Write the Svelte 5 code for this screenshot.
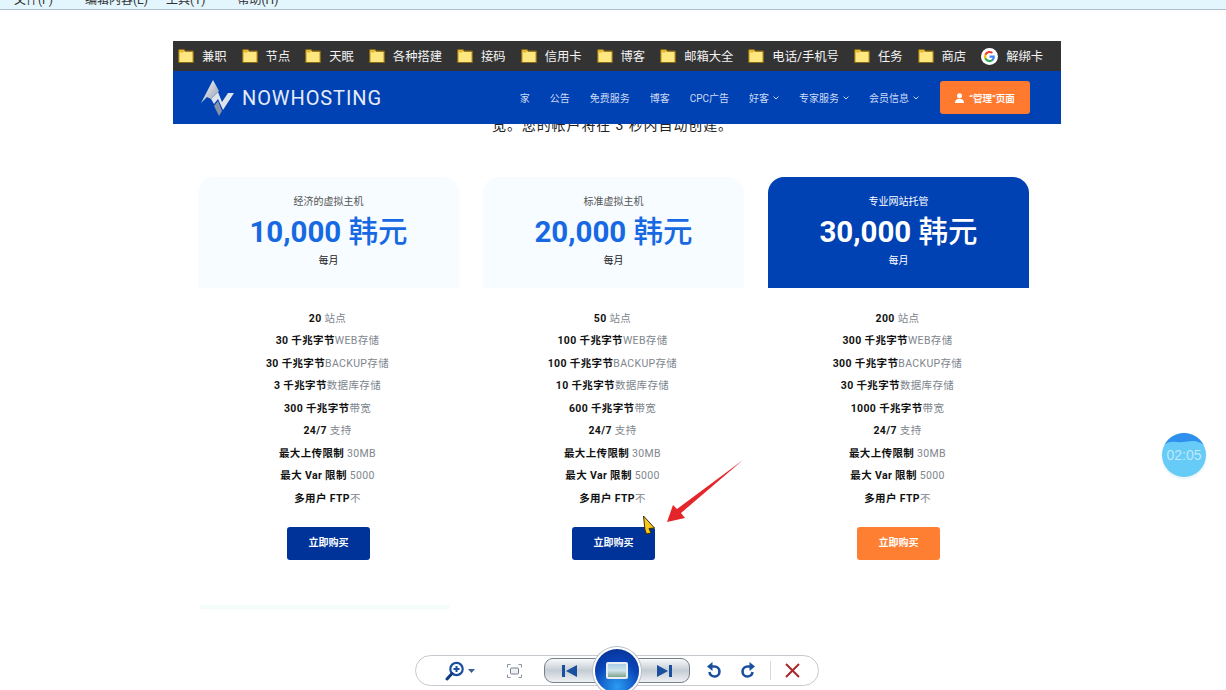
<script lang="ts">
  const bookmarks = ["兼职", "节点", "天眠", "各种搭建", "接码", "信用卡", "博客", "邮箱大全", "电话/手机号", "任务", "商店"];

  const navLinks = [
    { label: "家" },
    { label: "公告" },
    { label: "免费服务" },
    { label: "博客" },
    { label: "CPC广告" },
    { label: "好客", sub: true },
    { label: "专家服务", sub: true },
    { label: "会员信息", sub: true }
  ];

  const plans = [
    { name: "经济的虚拟主机", price: "10,000", sites: 20, web: 30, backup: 30, db: 3, traffic: 300 },
    { name: "标准虚拟主机", price: "20,000", sites: 50, web: 100, backup: 100, db: 10, traffic: 600 },
    { name: "专业网站托管", price: "30,000", sites: 200, web: 300, backup: 300, db: 30, traffic: 1000, featured: true }
  ];

  function rows(p: any) {
    return [
      [`${p.sites}`, " 站点"],
      [`${p.web} 千兆字节`, "WEB存储"],
      [`${p.backup} 千兆字节`, "BACKUP存储"],
      [`${p.db} 千兆字节`, "数据库存储"],
      [`${p.traffic} 千兆字节`, "带宽"],
      ["24/7", " 支持"],
      ["最大上传限制", " 30MB"],
      ["最大 Var 限制", " 5000"],
      ["多用户 FTP", "不"]
    ];
  }
</script>

<div class="menu-strip">
  <span>文件(F)</span><span>编辑内容(E)</span><span>工具(T)</span><span>帮助(H)</span>
</div>

<div class="site">
  <div class="bookmarks">
    {#each bookmarks as b}
      <span class="bm">
        <svg width="16" height="14" viewBox="0 0 16 14">
          <path d="M.7 1.500a.8.800 0 0 1 .8-.8h4.500l1.500 1.500h7a.8.800 0 0 1 .8.8v9.800a.8.800 0 0 1-.8.8H1.500a.8.800 0 0 1-.8-.8z" fill="#ffe77f" stroke="#8a6a12" stroke-width="1.300" />
          <path d="M1.400 1.400h4.300v2H1.400z" fill="#e5b52a" />
        </svg>
        {b}
      </span>
    {/each}
    <span class="bm">
      <svg width="17" height="17" viewBox="0 0 48 48">
        <circle cx="24" cy="24" r="24" fill="#fff" />
        <path d="M39 24.500c0-1.200-.1-2.300-.3-3.400H24v6.400h8.400a7.200 7.200 0 0 1-3.100 4.700v3.900h5C37.300 33 39 29.100 39 24.500z" fill="#4285f4" />
        <path d="M24 40c4.200 0 7.700-1.400 10.300-3.800l-5-3.900c-1.400.9-3.200 1.500-5.300 1.500-4.100 0-7.500-2.700-8.700-6.400h-5.200v4A16 16 0 0 0 24 40z" fill="#34a853" />
        <path d="M15.300 27.400a9.600 9.600 0 0 1 0-6.800v-4h-5.200a16 16 0 0 0 0 14.800z" fill="#fbbc05" />
        <path d="M24 14.200c2.300 0 4.300.8 5.900 2.300l4.400-4.400A16 16 0 0 0 10.100 16.600l5.200 4c1.200-3.700 4.600-6.400 8.700-6.400z" fill="#ea4335" />
      </svg>
      解绑卡
    </span>
  </div>

  <header class="nav">
    <div class="logo">
      <svg width="33" height="36" viewBox="0 0 33 36">
        <defs>
          <linearGradient id="silver" x1="0" y1="0" x2="1" y2="1">
            <stop offset="0" stop-color="#ffffff" />
            <stop offset="1" stop-color="#8d99ad" />
          </linearGradient>
        </defs>
        <path d="M0 23 L12 0 L18 11 L10 19 L6 17z" fill="url(#silver)" />
        <path d="M10 19 L17 12 L21 22 L27 13 L33 13 L22 30 L17 19 L13 24z" fill="#dfe4ec" />
        <path d="M13 26 L17 21 L21 31 L18 36z" fill="#8592a8" />
      </svg>
      <span>NOWHOSTING</span>
    </div>
    <nav>
      {#each navLinks as l}
        <span class="link">
          {l.label}
          {#if l.sub}
            <svg width="6" height="4" viewBox="0 0 6 4"><path d="M.6.6 3 3l2.400-2.400" fill="none" stroke="#c9d8f2" stroke-width="1" /></svg>
          {/if}
        </span>
      {/each}
    </nav>
    <button class="panel-btn">
      <svg width="9" height="10" viewBox="0 0 9 10"><circle cx="4.500" cy="2.700" r="2.500" fill="#fff" /><path d="M0 10c0-3 1.800-4.200 4.500-4.200S9 7 9 10z" fill="#fff" /></svg>
      “管理”页面
    </button>
  </header>

  <p class="intro">宽。您的帐户将在 3 秒内自动创建。</p>

  <section class="plans">
    {#each plans as p}
      <article class="plan">
        <div class="head" class:featured={p.featured}>
          <div class="name">{p.name}</div>
          <div class="price"><b>{p.price}</b> 韩元</div>
          <div class="per">每月</div>
        </div>
        <ul>
          {#each rows(p) as r}
            <li><b>{r[0]}</b>{r[1]}</li>
          {/each}
        </ul>
        <button class="buy" class:orange={p.featured}>立即购买</button>
      </article>
    {/each}
  </section>

  <div class="next-row"></div>
</div>

<svg class="annot" width="1226" height="690" viewBox="0 0 1226 690">
  <polygon points="743,460 681,513 685,518 667,522 673,505 677,509" fill="#e4262b" />
  <polygon points="643.500,516 654.500,528 649,528.500 651,533 646.500,534 645,530" fill="#f9c81e" stroke="#3a3000" stroke-width="1" />
</svg>

<div class="timer">
  <svg width="44" height="44" viewBox="0 0 44 44">
    <path d="M0 0h44v13c-5-3-8-5-14-5-6 0-10 2-15 1C9 8 5 9 0 13z" fill="#2f8fec" />
  </svg>
  <span>02:05</span>
</div>

<div class="viewer">
  <span class="zoom-tool">
    <svg width="20" height="20" viewBox="0 0 20 20">
      <circle cx="11.500" cy="8" r="6.200" fill="#fff" stroke="#1a4fa0" stroke-width="2.200" />
      <path d="M7 12.500 2 18" stroke="#123a80" stroke-width="3" stroke-linecap="round" />
      <path d="M8.500 8h6M11.500 5v6" stroke="#1a4fa0" stroke-width="2" />
    </svg>
    <svg width="7" height="4" viewBox="0 0 7 4"><path d="M0 0h7L3.500 4z" fill="#3a5d92" /></svg>
  </span>
  <svg class="fit" width="15" height="14" viewBox="0 0 15 14">
    <rect x="3.500" y="4" width="8" height="6" rx="1" fill="#eef1f4" stroke="#77818c" />
    <path d="M.5 3.500v-3h3M11.500.5h3v3M14.500 10.500v3h-3M3.500 13.500h-3v-3" fill="none" stroke="#8a949e" />
  </svg>
  <div class="player">
    <svg width="15" height="12" viewBox="0 0 15 12"><path d="M0 0h3v12H0zM15 0v12L4 6z" fill="#1a4fa0" /></svg>
    <span class="play-circle">
      <span class="pic"></span>
    </span>
    <svg width="15" height="12" viewBox="0 0 15 12"><path d="M0 0v12l11-6zM12 0h3v12h-3z" fill="#1a4fa0" /></svg>
  </div>
  <svg class="rot" width="16" height="17" viewBox="0 0 16 17">
    <path d="M5 4.500h3.500a5 5 0 1 1-5 5.500" fill="none" stroke="#1a4fa0" stroke-width="2.600" />
    <path d="M6.500 0v9L1 4.500z" fill="#1a4fa0" />
  </svg>
  <svg class="rot second" width="16" height="17" viewBox="0 0 16 17">
    <path d="M11 4.500H7.500a5 5 0 1 0 5 5.500" fill="none" stroke="#1a4fa0" stroke-width="2.600" />
    <path d="M9.500 0v9L15 4.500z" fill="#1a4fa0" />
  </svg>
  <span class="sep"></span>
  <svg width="15" height="15" viewBox="0 0 15 15"><path d="M1 1l13 13M14 1 1 14" stroke="#a8282c" stroke-width="2" /></svg>
</div>

<style>
  :global(body) {
    background: #fff;
    font-family: Roboto, "Noto Sans CJK SC", sans-serif;
    overflow: hidden;
  }

  .menu-strip {
    height: 9px;
    overflow: hidden;
    background: #e3f6fe;
    border-bottom: 1px solid #aebfd0;
    display: flex;
    gap: 32px;
    padding-left: 14px;
    font-size: 12px;
    line-height: 0;
    color: #333;
  }
  .menu-strip span:nth-child(3) { margin-left: -14px; }

  .site { width: 888px; margin: 31px 0 0 173px; }

  .bookmarks {
    height: 30px;
    background: #333;
    display: flex;
    align-items: center;
    gap: 15px;
    padding-left: 5px;
    color: #f4f4f4;
    font-size: 12.300px;
    white-space: nowrap;
  }
  .bm { display: flex; align-items: center; gap: 8px; }

  .nav {
    position: relative;
    z-index: 2;
    height: 53px;
    background: #0041b3;
    display: flex;
    align-items: center;
    padding: 0 31px 0 28px;
  }
  .logo { display: flex; align-items: center; gap: 8px; color: #e4ecf8; font-size: 20px; letter-spacing: 0.900px; }
  nav { margin-left: auto; display: flex; gap: 20px; color: #cfdcf4; font-size: 10px; margin-right: 21px; }
  .link { display: flex; align-items: center; gap: 4px; }
  .panel-btn {
    width: 90px;
    height: 33px;
    border: none;
    border-radius: 3px;
    background: #ff7a2f;
    color: #fff;
    font: 700 9.500px Roboto, "Noto Sans CJK SC", sans-serif;
    display: flex;
    align-items: center;
    justify-content: center;
    gap: 5px;
    padding: 0;
  }

  .intro {
    margin: -11px 0 0;
    height: 24px;
    line-height: 24px;
    text-align: center;
    font-size: 14px;
    color: #222;
    padding-right: 9px;
    letter-spacing: 0.900px;
  }

  .plans {
    display: grid;
    grid-template-columns: repeat(3, 261px);
    gap: 24px;
    padding: 0 32px 0 25px;
    margin-top: 40px;
  }
  .plan { text-align: center; }

  .head {
    height: 111px;
    box-sizing: border-box;
    padding-top: 18px;
    background: #f6fcff;
    border-radius: 16px 16px 0 0;
    color: #1668e3;
  }
  .head.featured { background: #0041b3; color: #fff; }
  .name { font-size: 10px; line-height: 14px; color: #555; }
  .price { font-size: 29.500px; font-weight: 500; line-height: 40px; margin-top: 3px; }
  .price b { font-weight: 700; }
  .per { font-size: 10px; line-height: 14px; margin-top: 2px; color: #222; }
  .featured .name, .featured .per { color: #fff; }

  ul {
    list-style: none;
    margin: 0;
    padding: 19.500px 0 0;
    font-size: 10.500px;
    line-height: 22.500px;
    color: #80868e;
    letter-spacing: 0.350px;
    transform: translateX(-1px);
  }
  li b { color: #111; }

  .buy {
    display: block;
    width: 83px;
    height: 33px;
    margin: 17px auto 0;
    border: none;
    border-radius: 3px;
    background: #003399;
    color: #fff;
    font: 700 10px/31px Roboto, "Noto Sans CJK SC", sans-serif;
    padding: 0 0 2px;
  }
  .buy.orange { background: #ff7f32; }

  .next-row { width: 250px; height: 4px; margin: 45px 0 0 27px; background: #f3fcfa; }

  .annot { position: absolute; left: 0; top: 0; pointer-events: none; z-index: 5; }

  .timer {
    position: absolute;
    left: 1162px;
    top: 433px;
    width: 44px;
    height: 44px;
    overflow: hidden;
    border-radius: 50%;
    background: #66cbf7;
    box-shadow: 0 2px 3px #e6f1f8;
    display: flex;
    align-items: center;
    justify-content: center;
    color: #bfe9fc;
    font: 14px "Liberation Sans", sans-serif;
  }
  .timer svg { position: absolute; left: 0; top: 0; }
  .timer span { position: relative; }

  .viewer {
    position: absolute;
    left: 415px;
    top: 655px;
    width: 404px;
    height: 31px;
    box-sizing: border-box;
    border: 1px solid #c6cace;
    border-radius: 16px;
    background: #fff;
    display: flex;
    align-items: center;
    padding-left: 29px;
    z-index: 6;
  }
  .zoom-tool { display: flex; align-items: center; gap: 3px; }
  .fit { margin-left: 32px; }
  .player {
    position: relative;
    margin-left: 22px;
    width: 146px;
    height: 25px;
    box-sizing: border-box;
    border: 1px solid #777f88;
    border-radius: 9px;
    background: linear-gradient(#f8f9fa 0, #c4ccd3 50%, #eef1f4 100%);
    display: flex;
    align-items: center;
    justify-content: space-between;
    padding: 0 17px;
  }
  .play-circle {
    position: absolute;
    left: 50%;
    top: 50%;
    width: 44px;
    height: 44px;
    transform: translate(-50%, -50%);
    box-sizing: border-box;
    border-radius: 50%;
    background: radial-gradient(circle at 50% 85%, #2a9df2 0, #0a45b8 55%, #062f8c 100%);
    box-shadow: 0 0 0 2px #fff, 0 0 0 3px #b8bfc6;
    display: flex;
    align-items: center;
    justify-content: center;
  }
  .pic {
    width: 22px;
    height: 17px;
    box-sizing: border-box;
    border: 2px solid #e8eef4;
    border-radius: 2px;
    background: linear-gradient(#a9cfe6 0, #cfe3ea 50%, #7ea58d 100%);
  }
  .rot { margin-left: 16px; }
  .rot.second { margin-left: 18px; }
  .sep { width: 1px; height: 19px; margin: 0 14px 0 14px; background: #d5d9dd; }
</style>
